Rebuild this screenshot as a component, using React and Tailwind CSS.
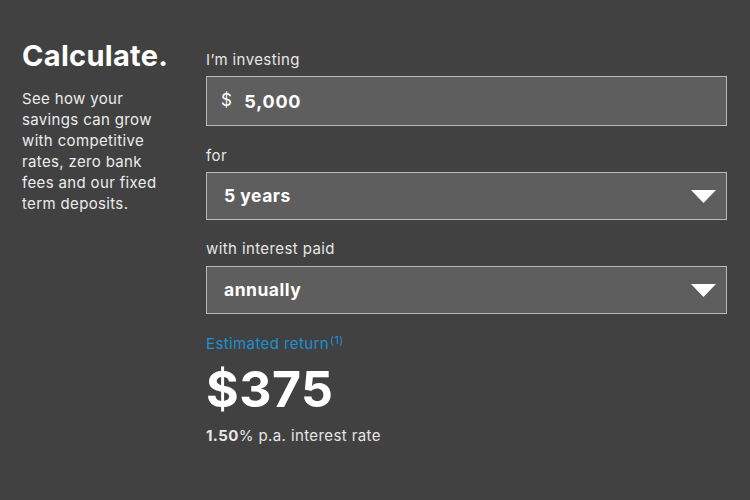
import { useState } from 'react'

function Caret() {
  return (
    <svg width="25" height="13" viewBox="0 0 25 13" className="shrink-0">
      <path d="M0 0 H25 L12.5 13 Z" fill="#fff" />
    </svg>
  )
}

function Select({ value }) {
  return (
    <div className="flex items-center justify-between h-[48px] pl-[17px] pr-[10px] bg-[#5e5e5e] border border-[#b9b9b9]">
      <span className="text-[17.5px] font-bold tracking-[0.5px] text-white">{value}</span>
      <Caret />
    </div>
  )
}

export default function App() {
  const [amount] = useState('5,000')

  return (
    <div className="w-[750px] h-[500px] bg-[#414141] text-white flex font-['Inter',sans-serif]">
      {/* Intro */}
      <div className="w-[206px] pl-[22px] pt-[38px]">
        <h1 className="text-[29px] leading-[36px] font-bold tracking-[0.3px]">Calculate.</h1>
        <p className="mt-[14px] w-[142px] text-[15px] leading-[21px] tracking-[0.35px] text-[#ececec]">
          See how your savings can grow with competitive rates, zero bank fees and our fixed term deposits.
        </p>
      </div>

      {/* Form */}
      <div className="w-[521px] pt-[49px] tracking-[0.4px]">
        <label className="block text-[15px] leading-[22px] text-[#e6e6e6]">I’m investing</label>
        <div className="mt-[5px] flex items-center h-[50px] px-[14px] bg-[#5e5e5e] border border-[#b9b9b9]">
          <span className="text-[17px] text-white">$</span>
          <span className="ml-[12px] text-[18px] font-bold tracking-[0.8px]">{amount}</span>
        </div>

        <label className="block mt-[19px] text-[15px] leading-[22px] text-[#e6e6e6]">for</label>
        <div className="mt-[5px]">
          <Select value="5 years" />
        </div>

        <label className="block mt-[18px] text-[15px] leading-[22px] text-[#e6e6e6]">with interest paid</label>
        <div className="mt-[6px]">
          <Select value="annually" />
        </div>

        <div className="mt-[19px] text-[15px] leading-[22px] text-[#1e90d2]">
          Estimated return<sup className="text-[11px] ml-[1px]">(1)</sup>
        </div>
        <div className="mt-[6px] text-[50px] leading-[56px] font-bold tracking-[0.5px]">$375</div>
        <div className="mt-[8px] text-[15px] leading-[22px] text-[#e6e6e6]">
          <span className="font-bold">1.50</span>% p.a. interest rate
        </div>
      </div>
    </div>
  )
}
